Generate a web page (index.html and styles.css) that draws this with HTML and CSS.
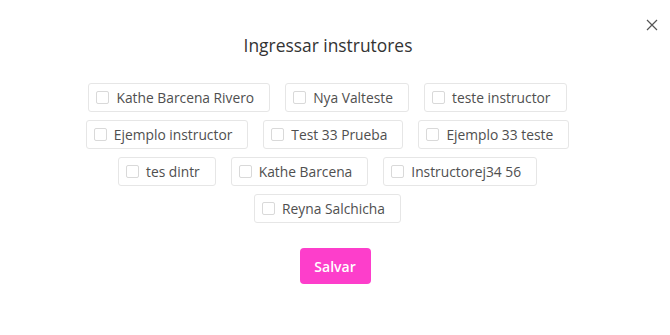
FILE: index.html
```html
<!DOCTYPE html>
<html lang="pt">
<head>
<meta charset="utf-8">
<title>Ingressar instrutores</title>
<link rel="stylesheet" href="styles.css">
</head>
<body>
<div class="modal">
  <div class="header">
    <h1 class="title">Ingressar instrutores</h1>
    <button class="close" aria-label="Fechar">
      <svg width="12" height="12" viewBox="0 0 12 12"><path d="M1 1L11 11M11 1L1 11" stroke="#555" stroke-width="1.2" fill="none"/></svg>
    </button>
  </div>
  <div class="list">
    <label class="item"><span class="box"></span><span class="name">Kathe Barcena Rivero</span></label>
    <label class="item"><span class="box"></span><span class="name">Nya Valteste</span></label>
    <label class="item"><span class="box"></span><span class="name">teste instructor</span></label>
    <label class="item"><span class="box"></span><span class="name">Ejemplo instructor</span></label>
    <label class="item"><span class="box"></span><span class="name">Test 33 Prueba</span></label>
    <label class="item"><span class="box"></span><span class="name">Ejemplo 33 teste</span></label>
    <label class="item"><span class="box"></span><span class="name">tes dintr</span></label>
    <label class="item"><span class="box"></span><span class="name">Kathe Barcena</span></label>
    <label class="item"><span class="box"></span><span class="name">Instructorej34 56</span></label>
    <label class="item"><span class="box"></span><span class="name">Reyna Salchicha</span></label>
  </div>
  <div class="actions">
    <button class="save">Salvar</button>
  </div>
</div>
</body>
</html>
```
FILE: styles.css
```css
* { box-sizing: border-box; }
html, body { margin: 0; padding: 0; background: #fff; }
body { font-family: "Open Sans", "Liberation Sans", sans-serif; color: #555; }
.modal { width: 670px; height: 335px; padding: 14px 11px 0 11px; }
.header { display: flex; align-items: flex-start; }
.title { flex: 1; margin: 19px 0 0 0; text-align: center; font-size: 17.4px; line-height: 24px; font-weight: 400; color: #333; }
.close { width: 14px; height: 14px; margin-top: 4px; padding: 0; border: 0; background: none; display: flex; align-items: center; justify-content: center; }
.list { display: flex; flex-wrap: wrap; justify-content: center; max-width: 540px; margin: 26px auto 0; }
.item { display: flex; align-items: center; height: 29px; padding: 0 15px 0 7px; margin: 0 15px 8px 0; border: 1px solid #e6e6e6; border-radius: 3px; font-size: 13.8px; color: #4f4f4f; }
.box { width: 13px; height: 13px; border: 1px solid #d9d9d9; border-radius: 2px; margin-right: 7px; flex: none; }
.name { white-space: nowrap; line-height: 20px; }
.actions { display: flex; justify-content: center; margin-top: 17px; }
.save { width: 71px; height: 36px; border: 0; border-radius: 4px; background: #fd3ecb; color: #fff; font-family: inherit; font-size: 14px; font-weight: 600; }
```
